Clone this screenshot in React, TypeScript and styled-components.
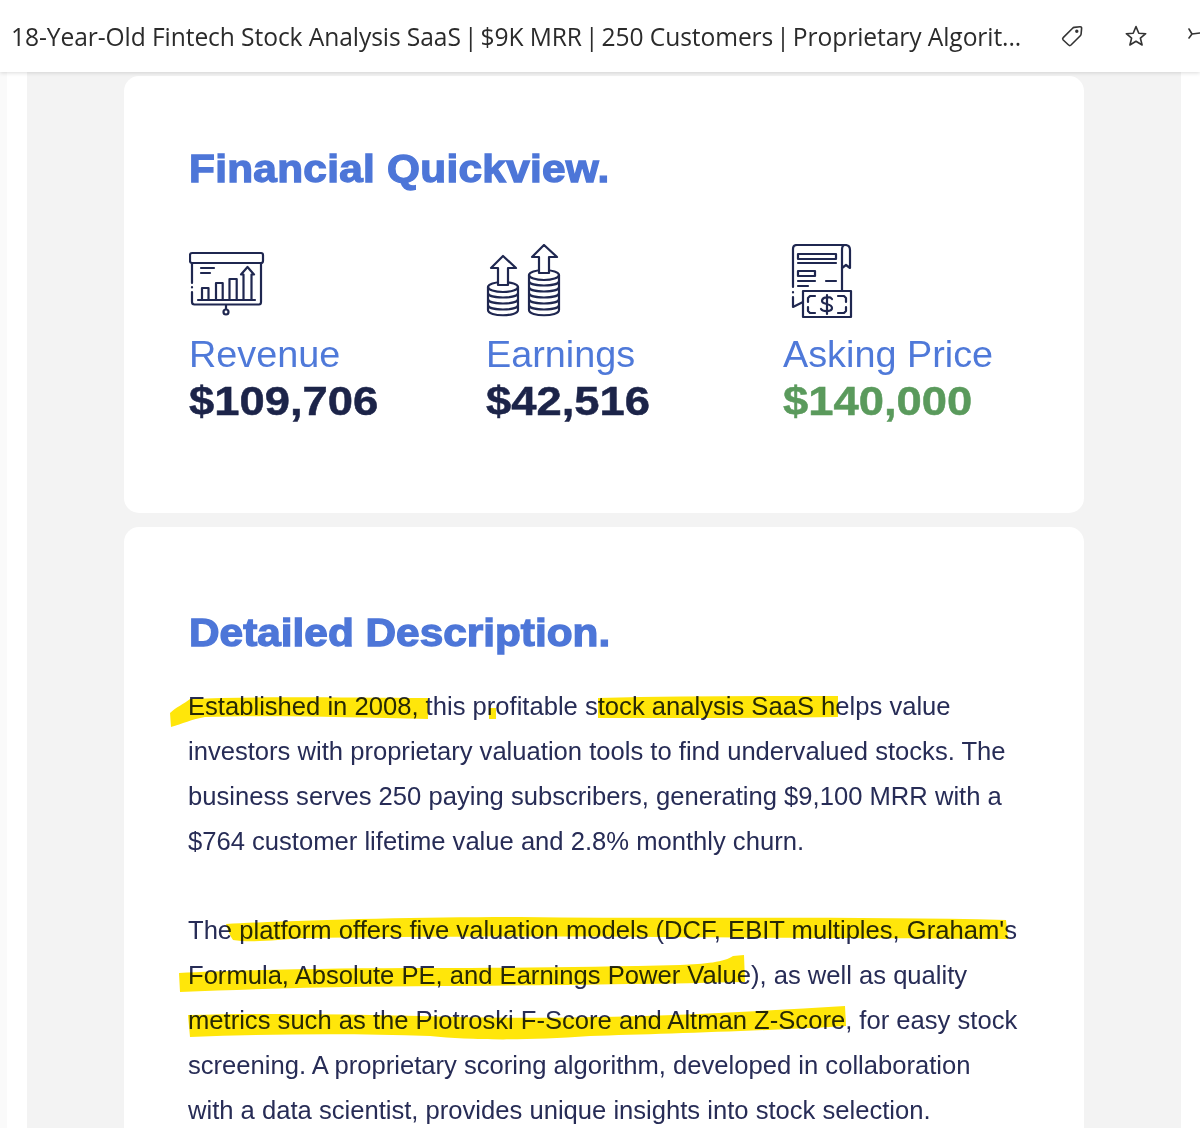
import React from 'react'
import styled, { createGlobalStyle } from 'styled-components'

const GlobalStyle = createGlobalStyle`
    html, body {
        margin: 0;
        padding: 0;
        background: #fff;
    }
    body {
        width: 1200px;
        height: 1128px;
        overflow: hidden;
        font-family: "Liberation Sans", Arial, sans-serif;
    }
`

const Screen = styled.div`
    width: 1200px;
    height: 1128px;
    overflow: hidden;
    display: flex;
    flex-direction: column;
    background: #fff;
`

const TitleBar = styled.header`
    position: relative;
    z-index: 2;
    flex: 0 0 72px;
    display: flex;
    align-items: center;
    padding-left: 11px;
    background: #fff;
    box-shadow: 0 1px 4px rgba(0, 0, 0, 0.14);
    overflow: hidden;
`

const TitleText = styled.h1`
    margin: 0;
    width: 1012px;
    flex: 0 0 1012px;
    font-family: "Open Sans", "Noto Sans", sans-serif;
    font-size: 24.6px;
    letter-spacing: -0.085px;
    font-weight: 400;
    color: #2b2b2b;
    white-space: nowrap;
`

const Pipe = styled.span`
    margin: 0 3.1px;
`

const BarIcons = styled.div`
    display: flex;
    align-items: center;
    gap: 40px;
    margin-left: 37px;
    color: #333;
    flex: 0 0 auto;
`

const BarIcon = styled.svg`
    width: 24px;
    height: 24px;
    flex: 0 0 24px;
    fill: none;
    stroke: currentColor;
    stroke-width: 1.6;
    stroke-linejoin: round;
    stroke-linecap: round;
`

const Body = styled.div`
    flex: 1;
    display: flex;
    min-height: 0;
`

const Rail = styled.div`
    flex: 0 0 7px;
    background: #fafafa;
`

const Gutter = styled.div<{ $width: number }>`
    flex: 0 0 ${(p) => p.$width}px;
    background: #fff;
`

const Canvas = styled.main`
    flex: 0 0 1154px;
    background: #f3f3f3;
    padding: 4px 97px 0;
    box-sizing: border-box;
    display: flex;
    flex-direction: column;
    gap: 14px;
`

const Card = styled.section`
    position: relative;
    width: 960px;
    flex: 0 0 auto;
    box-sizing: border-box;
    background: #fff;
    border-radius: 15px;
    padding: 0 65px;
`

const QuickCard = styled(Card)`
    height: 437px;
    padding-top: 69px;
`

const DetailCard = styled(Card)`
    height: 640px;
    padding-top: 82px;
`

// the original is a wide heavy face, so the bold is stretched sideways
const Heading = styled.h2<{ $tracking?: number }>`
    margin: 0;
    font-size: 38.5px;
    line-height: 48px;
    font-weight: 700;
    color: #4d76d8;
    -webkit-text-stroke: 1.3px #4d76d8;
    letter-spacing: ${(p) => p.$tracking ?? 0}px;
    transform: scaleX(1.1);
    transform-origin: left center;
    white-space: nowrap;
`

const StatGrid = styled.div`
    display: grid;
    grid-template-columns: repeat(3, 297px);
    margin-top: 51px;
`

const Stat = styled.div`
    display: flex;
    flex-direction: column;
`

const IconSlot = styled.div`
    height: 75px;
`

const Drawing = styled.svg`
    display: block;
    width: 80px;
    height: 80px;
    fill: none;
    stroke: #1f2750;
    stroke-width: 2.2;
    stroke-linejoin: round;
    stroke-linecap: round;
`

const StatLabel = styled.div`
    margin-top: 12px;
    font-size: 37.8px;
    line-height: 47px;
    color: #4f79d9;
`

const StatValue = styled.div<{ $green?: boolean }>`
    font-size: 40.5px;
    line-height: 47px;
    font-weight: 700;
    color: ${(p) => (p.$green ? '#5a9a5c' : '#1c2449')};
    -webkit-text-stroke: 0.5px ${(p) => (p.$green ? '#5a9a5c' : '#1c2449')};
    transform: scaleX(1.12);
    transform-origin: left center;
`

const Paragraphs = styled.div`
    margin: 27px 0 0 -1px;
    display: flex;
    flex-direction: column;
    gap: 44px;
`

const Paragraph = styled.p`
    margin: 0;
    font-size: 25.6px;
    line-height: 45px;
    color: #272c56;
    white-space: nowrap;
`

const Highlights = styled.svg`
    position: absolute;
    left: 0;
    top: 0;
    width: 960px;
    height: 640px;
    mix-blend-mode: multiply;
    pointer-events: none;
    fill: #ffe60a;
`

// highlighter strokes, in page coordinates (see the viewBox)
const strokes = [
    'M170 713 C176 707 184 704 190 699 C260 696 350 698 428 698 L428 719 C350 717 270 715 205 717 C192 719 182 724 171 727 Z',
    'M489 708 L496 708 L496 719 L489 719 Z',
    'M598 698 C680 696 760 696 838 696 L838 717 C760 718 680 718 598 718 Z',
    'M226 924 C300 920 420 917 520 917 C680 919 860 916 1006 920 L1008 939 C880 938 760 938 660 937 C520 936 400 937 300 938 C280 940 250 943 233 940 C230 936 228 930 226 924 Z',
    'M179 973 C240 970 340 968 430 968 C520 968 600 967 680 965 C705 964 725 962 733 956 L744 955 L745 982 C660 984 560 985 470 986 C370 986 270 988 180 992 Z',
    'M188 1015 C260 1013 340 1014 420 1016 C560 1021 700 1015 845 1006 L846 1026 C760 1031 660 1034 590 1036 C520 1041 470 1040 430 1036 C350 1033 270 1034 190 1037 Z',
]

const ChartIcon = () => (
    <Drawing viewBox="189 244 80 80">
        <rect x="190" y="253" width="73" height="10" rx="2" />
        <path d="M192 263 V283 M192 287 V287.5 M192 292 V302 Q192 304.5 194.5 304.5 H259 Q261 304.5 261 302 V263" />
        <path d="M201 268 H214 M201 273 H210" />
        <path d="M198 300 H255" />
        <path d="M202 300 V288 H208.5 V300 M216 300 V283 H222.7 V300 M229.5 300 V279 H236.7 V300" />
        <path d="M243.5 300 V274.5 H241 L247.5 267 L254 274.5 H251.5 V300" />
        <path d="M226 305 V309" />
        <circle cx="226" cy="312" r="2.5" />
    </Drawing>
)

const CoinsIcon = () => (
    <Drawing viewBox="486 244 80 80">
        <ellipse cx="503" cy="287" rx="15" ry="5" />
        <path d="M488 287 V310 C488 317 518 317 518 310 V287" />
        <path d="M488 293 C488 299 518 299 518 293 M488 299 C488 305 518 305 518 299 M488 305 C488 311 518 311 518 305" />
        <path d="M498 285 V268 H491 L503 256 L516 268 H508 V285 Z" fill="#fff" />
        <ellipse cx="544" cy="275" rx="15" ry="5" />
        <path d="M529 275 V310 C529 317 559 317 559 310 V275" />
        <path d="M529 281 C529 287 559 287 559 281 M529 287 C529 293 559 293 559 287 M529 293 C529 299 559 299 559 293 M529 299 C529 305 559 305 559 299 M529 305 C529 311 559 311 559 305" />
        <path d="M539 273 V257 H532 L544 245 L557 257 H549 V273 Z" fill="#fff" />
    </Drawing>
)

const InvoiceIcon = () => (
    <Drawing viewBox="783 244 80 80">
        <path d="M793 287 V249 Q793 245 797 245 H845 Q850 245 850 250 V268 L846 265 L842 268 V250 Q842 245 845 245" />
        <path d="M842 268 V290" />
        <path d="M793 292 V292.5 M793 297 V307 L803 302" />
        <rect x="803" y="291" width="48" height="26" />
        <rect x="798" y="254" width="38" height="5" />
        <path d="M798 263 H836" />
        <rect x="798" y="271" width="17" height="5" />
        <path d="M798 281 H815 M826 281 H836 M798 286 H808" />
        <path d="M815 296 H810 L808 298 V302 M808 307 V311 L810 313 H815 M838 296 H844 L846 298 V302 M846 307 V311 L844 313 H838" />
        <path d="M832 299 C830 296 822 297 822 301 C822 305 832 303 832 308 C832 312 823 312 821 309 M827 295 V314" />
    </Drawing>
)

export default function App() {
    return (
        <Screen>
            <GlobalStyle />
            <TitleBar>
                <TitleText>
                    18-Year-Old Fintech Stock Analysis SaaS<Pipe>|</Pipe>$9K MRR<Pipe>|</Pipe>250 Customers<Pipe>|</Pipe>Proprietary Algorit...
                </TitleText>
                <BarIcons>
                    <BarIcon viewBox="0 0 24 24">
                        <path d="M3.2 13.6 L12.6 4.2 Q13.3 3.5 14.2 3.4 L20 2.8 Q21.7 2.7 21.6 4.4 L21.1 10 Q21 11 20.3 11.7 L11 21 Q9.8 22.1 8.6 21 L3.2 16 Q2.1 14.8 3.2 13.6 Z" />
                        <circle cx="16.8" cy="7.2" r="0.9" fill="currentColor" />
                    </BarIcon>
                    <BarIcon viewBox="0 0 24 24">
                        <path d="M12 2.6 L14.8 9.2 L21.7 9.7 L16.4 14.2 L18.1 21 L12 17.3 L5.9 21 L7.6 14.2 L2.3 9.7 L9.2 9.2 Z" />
                    </BarIcon>
                    <BarIcon viewBox="0 0 24 24">
                        <path d="M1 5 L4 10 L12 9 M1 14 L4 10" />
                    </BarIcon>
                </BarIcons>
            </TitleBar>
            <Body>
                <Rail />
                <Gutter $width={20} />
                <Canvas>
                    <QuickCard>
                        <Heading $tracking={0.25}>Financial Quickview.</Heading>
                        <StatGrid>
                            <Stat>
                                <IconSlot><ChartIcon /></IconSlot>
                                <StatLabel>Revenue</StatLabel>
                                <StatValue>$109,706</StatValue>
                            </Stat>
                            <Stat>
                                <IconSlot><CoinsIcon /></IconSlot>
                                <StatLabel>Earnings</StatLabel>
                                <StatValue>$42,516</StatValue>
                            </Stat>
                            <Stat>
                                <IconSlot><InvoiceIcon /></IconSlot>
                                <StatLabel>Asking Price</StatLabel>
                                <StatValue $green>$140,000</StatValue>
                            </Stat>
                        </StatGrid>
                    </QuickCard>
                    <DetailCard>
                        <Heading>Detailed Description.</Heading>
                        <Paragraphs>
                            <Paragraph>
                                Established in 2008, this profitable stock analysis SaaS helps value<br />
                                investors with proprietary valuation tools to find undervalued stocks. The<br />
                                business serves 250 paying subscribers, generating $9,100 MRR with a<br />
                                $764 customer lifetime value and 2.8% monthly churn.
                            </Paragraph>
                            <Paragraph>
                                The platform offers five valuation models (DCF, EBIT multiples, Graham's<br />
                                Formula, Absolute PE, and Earnings Power Value), as well as quality<br />
                                metrics such as the Piotroski F-Score and Altman Z-Score, for easy stock<br />
                                screening. A proprietary scoring algorithm, developed in collaboration<br />
                                with a data scientist, provides unique insights into stock selection.
                            </Paragraph>
                        </Paragraphs>
                        <Highlights viewBox="124 527 960 640">
                            {strokes.map((d, i) => (
                                <path key={i} d={d} />
                            ))}
                        </Highlights>
                    </DetailCard>
                </Canvas>
                <Gutter $width={19} />
            </Body>
        </Screen>
    )
}
